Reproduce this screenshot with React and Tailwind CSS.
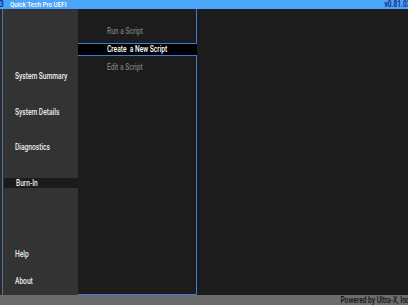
const font = { fontFamily: 'Roboto, "Liberation Sans", Arial, sans-serif' }

const sideItems = [
  { label: 'System Summary', gap: 'mt-0' },
  { label: 'System Details', gap: 'mt-[26px]' },
  { label: 'Diagnostics', gap: 'mt-[25px]' },
  { label: 'Burn-In', gap: 'mt-[26px]', active: true },
  { label: 'Help', gap: 'mt-[61px]' },
  { label: 'About', gap: 'mt-[17px]' },
]

const scriptItems = [
  { label: 'Run a Script' },
  { label: 'Create  a New Script', active: true },
  { label: 'Edit a Script' },
]

// the firmware font is a narrow one, so squeeze Roboto
function Narrow({ children, right }) {
  return (
    <span className={`inline-block scale-x-[0.78] ${right ? 'origin-right' : 'origin-left'}`}>{children}</span>
  )
}

export default function App() {
  return (
    <div
      className="w-[408px] h-[305px] overflow-hidden flex flex-col bg-[#1c1c1c] text-[8.5px] font-medium leading-none whitespace-pre"
      style={font}
    >
      {/* title bar */}
      <div className="h-[9px] shrink-0 bg-[#4aa5fb] flex items-center overflow-hidden">
        <span className="w-[4px] overflow-hidden flex justify-end text-[#1b2a8a] font-bold">3</span>
        <span className="ml-[6px] text-[8px] text-white">
          <Narrow>Quick Tech Pro UEFI</Narrow>
        </span>
        <span className="ml-auto -mr-[3px] text-[#1b2a8a] font-bold">
          <Narrow right>v0.81.03</Narrow>
        </span>
      </div>

      <div className="h-[286px] shrink-0 flex">
        <div className="w-[3px] bg-[#2a2a2a] border-r border-[#52719c]" />

        {/* main menu */}
        <div className="w-[75px] bg-[#333333] pt-[62px] flex flex-col">
          {sideItems.map((item) => (
            <div
              key={item.label}
              className={`${item.gap} h-[10px] flex items-center pl-[12px] text-[#ececec] ${item.active ? 'bg-[#1b1b1b] ml-[1px] pl-[11px]' : ''}`}
            >
              <Narrow>{item.label}</Narrow>
            </div>
          ))}
        </div>

        {/* sub menu */}
        <div className="w-[119px] bg-[#1c1c1c] border-r border-b border-[#3380d8] pt-[16px] flex flex-col">
          {scriptItems.map((item) =>
            item.active ? (
              <div
                key={item.label}
                className="mt-[6px] -mr-px h-[13px] bg-black border-y border-[#3380d8] flex items-center pl-[29px] text-white"
              >
                <Narrow>{item.label}</Narrow>
              </div>
            ) : (
              <div key={item.label} className="h-[12px] flex items-center pl-[29px] text-[#7a7a7a] last:mt-[5px]">
                <Narrow>{item.label}</Narrow>
              </div>
            )
          )}
        </div>

        <div className="flex-1 bg-[#1c1c1c]" />
      </div>

      {/* status bar */}
      <div className="h-[10px] shrink-0 bg-[#6c6c6c] flex items-center justify-end overflow-hidden">
        <span className="-mr-[1px] text-[#151515]">
          <Narrow right>Powered by Ultra-X, Inc</Narrow>
        </span>
      </div>
    </div>
  )
}
